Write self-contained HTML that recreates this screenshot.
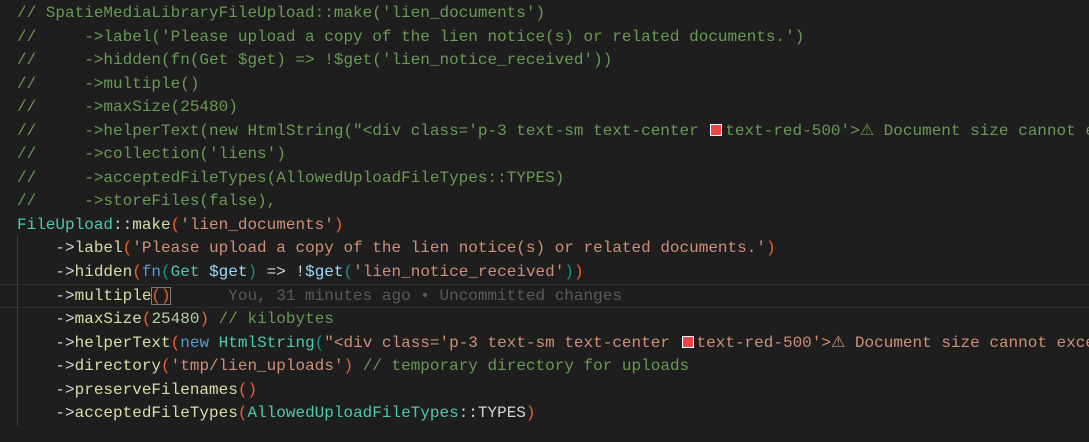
<!DOCTYPE html>
<html><head><meta charset="utf-8"><style>
html,body{margin:0;padding:0;background:#1e1e1e;width:1089px;height:442px;overflow:hidden}
.ed{position:absolute;left:17px;top:2px;font-family:"Liberation Mono",monospace;font-size:16px;line-height:23.55px;color:#d4d4d4}
.l{height:23.55px;white-space:pre}
.c{color:#6a9955}.s{color:#ce9178}.m{color:#dcdcaa}.t{color:#4ec9b0}.v{color:#9cdcfe}.k{color:#569cd6}.p{color:#f0602e}.q{color:#16958a}.n{color:#b5cea8}
.g{color:#5a5a5a}
.sw{display:inline-block;width:10px;height:10px;background:#ef4444;border:1px solid #fff;margin:0 3px 0 2px;vertical-align:-1px}
.cur{position:absolute;left:0;width:1089px;top:284px;height:22px;border-top:1px solid #2c2c2c;border-bottom:1px solid #2c2c2c}
.ig{position:absolute;left:17px;top:236px;width:1px;height:190px;background:#404040}
.box{outline:1px solid #7a7a7a;outline-offset:-1px}
</style></head><body>
<div class="cur"></div>
<div class="ig"></div>
<div class="ed"><div class="l c">// SpatieMediaLibraryFileUpload::make('lien_documents')</div><div class="l c">//     ->label('Please upload a copy of the lien notice(s) or related documents.')</div><div class="l c">//     ->hidden(fn(Get $get) => !$get('lien_notice_received'))</div><div class="l c">//     ->multiple()</div><div class="l c">//     ->maxSize(25480)</div><div class="l c">//     ->helperText(new HtmlString("&lt;div class='p-3 text-sm text-center <span class="sw"></span>text-red-500'>⚠ Document size cannot exceed</div><div class="l c">//     ->collection('liens')</div><div class="l c">//     ->acceptedFileTypes(AllowedUploadFileTypes::TYPES)</div><div class="l c">//     ->storeFiles(false),</div><div class="l"><span class="t">FileUpload</span>::<span class="m">make</span><span class="p">(</span><span class="s">'lien_documents'</span><span class="p">)</span></div><div class="l">    -><span class="m">label</span><span class="p">(</span><span class="s">'Please upload a copy of the lien notice(s) or related documents.'</span><span class="p">)</span></div><div class="l">    -><span class="m">hidden</span><span class="p">(</span><span class="k">fn</span><span class="q">(</span><span class="t">Get</span> <span class="v">$get</span><span class="q">)</span> => !<span class="v">$get</span><span class="q">(</span><span class="s">'lien_notice_received'</span><span class="q">)</span><span class="p">)</span></div><div class="l">    -><span class="m">multiple</span><span class="p box">()</span>      <span class="g">You, 31 minutes ago • Uncommitted changes</span></div><div class="l">    -><span class="m">maxSize</span><span class="p">(</span><span class="n">25480</span><span class="p">)</span> <span class="c">// kilobytes</span></div><div class="l">    -><span class="m">helperText</span><span class="p">(</span><span class="k">new</span> <span class="t">HtmlString</span><span class="q">(</span><span class="s">"&lt;div class='p-3 text-sm text-center <span class="sw"></span>text-red-500'>⚠ Document size cannot exceed</span></div><div class="l">    -><span class="m">directory</span><span class="p">(</span><span class="s">'tmp/lien_uploads'</span><span class="p">)</span> <span class="c">// temporary directory for uploads</span></div><div class="l">    -><span class="m">preserveFilenames</span><span class="p">()</span></div><div class="l">    -><span class="m">acceptedFileTypes</span><span class="p">(</span><span class="t">AllowedUploadFileTypes</span>::TYPES<span class="p">)</span></div></div>
</body></html>
